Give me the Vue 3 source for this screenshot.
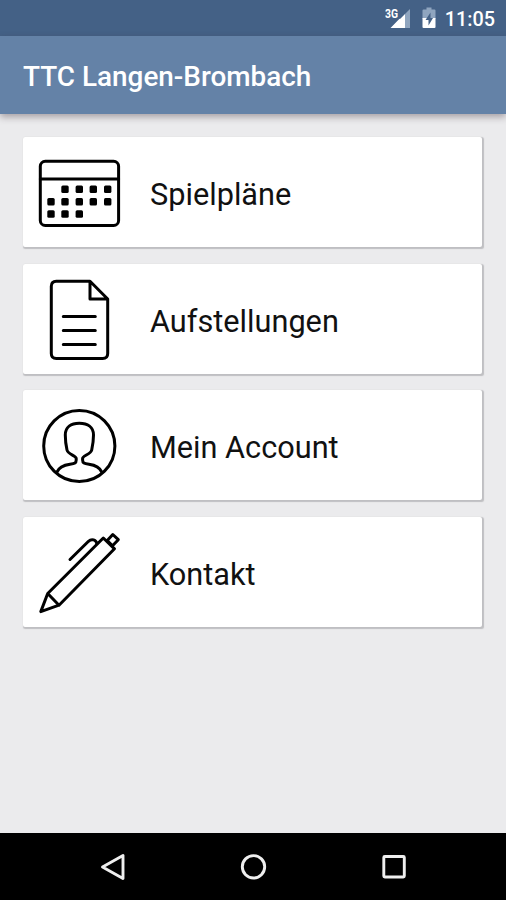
<script setup>
const items = [
  { icon: 'calendar', label: 'Spielpläne' },
  { icon: 'document', label: 'Aufstellungen' },
  { icon: 'person', label: 'Mein Account' },
  { icon: 'pen', label: 'Kontakt' },
]
const dots = [
  [42, 52.3], [56.3, 52.3], [70.3, 52.3], [84.7, 52.3],
  [28, 64.7], [42, 64.7], [56.3, 64.7], [70.3, 64.7], [84.7, 64.7],
  [28, 77], [42, 77], [56.3, 77],
]
</script>

<template>
  <div class="screen">
    <div class="status">
      <svg class="signal" viewBox="0 0 28 24" width="28" height="24">
        <path d="M20 7L25 2V21H20Z" fill="#8fa5bf" />
        <path d="M14.500 11.800L5.500 21H20V7L15 12Z" fill="#fff" />
        <text x="0" y="11" textLength="13" lengthAdjust="spacingAndGlyphs" class="net">3G</text>
      </svg>
      <svg class="battery" viewBox="0 0 14 22" width="14" height="22">
        <path d="M4.500 0.500H9.500V2.500H12.500Q13.500 2.500 13.500 3.500V12H0.500V3.500Q0.500 2.500 1.500 2.500H4.500Z" fill="#8fa5bf" />
        <path d="M0.500 11H13.500V20Q13.500 21 12.500 21H1.500Q0.500 21 0.500 20Z" fill="#fff" />
        <path d="M8.500 5.500L3.500 13H6.500V18.500L11 11H8.500Z" fill="#446186" />
      </svg>
      <span class="time">11:05</span>
    </div>
    <header class="bar"><h1>TTC Langen-Brombach</h1></header>
    <main class="list">
      <div v-for="item in items" :key="item.icon" class="card">
        <svg class="icon" viewBox="0 0 110 110" width="110" height="110">
          <g v-if="item.icon === 'calendar'">
            <rect x="17.3" y="24.3" width="78.300" height="64.200" rx="5" />
            <path d="M17.300 42H95.600" />
            <rect v-for="(d, i) in dots" :key="i" class="dot" :x="d[0] - 3.7" :y="d[1] - 3.7" width="7.4" height="7.4" rx="1.5" />
          </g>
          <g v-else-if="item.icon === 'document'">
            <path d="M33.300 17.200H67L84.700 35V89.500Q84.700 94.500 79.700 94.500H33.300Q28.300 94.500 28.300 89.500V22.200Q28.300 17.200 33.300 17.200ZM67 17.200V35H84.700M40.300 52.500H72.300M40.300 66.500H72.300M40.300 80.500H72.300" />
          </g>
          <g v-else-if="item.icon === 'person'">
            <circle cx="56.300" cy="56" r="35.600" />
            <path d="M33.700 82.300C36 77 41 75 47 74.200C52 73.500 53.200 73 53.200 70V68.500C53.200 65.500 45 64.500 44 60C43 55.500 42.300 49 42.300 45C42.300 37 48 33.300 56.300 33.300S70.500 37 70.500 45C70.500 49 69.700 55.500 68.700 60C67.700 64.500 59.600 65.500 59.600 68.500V70C59.600 73 61 73.500 66 74.200C72 75 76.700 77 79 82.300" />
          </g>
          <g v-else>
            <path d="M17.800 94.600L24.700 76.500L80.300 21L91.500 31.800L36 88.200ZM24.700 76.500L36 88.200M47 42.500L65.500 24.300C68.500 21.500 73.500 22.500 73.800 27M84.200 23.500L89.800 17.500L95.300 22.700L89.500 28.800Z" />
          </g>
        </svg>
        <span class="label">{{ item.label }}</span>
      </div>
    </main>
    <nav class="nav">
      <svg viewBox="0 0 30 30" width="30" height="30"><path d="M4.500 15L25 3.500V26.500Z" /></svg>
      <svg viewBox="0 0 30 30" width="30" height="30"><circle cx="15.500" cy="14.800" r="11.200" /></svg>
      <svg viewBox="0 0 30 30" width="30" height="30"><rect x="4.800" y="4.500" width="20.500" height="20.500" rx="1" /></svg>
    </nav>
  </div>
</template>

<style>
body { margin: 0; }
</style>

<style scoped>
.screen {
  width: 506px;
  height: 900px;
  display: flex;
  flex-direction: column;
  background: #ebebed;
  font-family: Roboto, sans-serif;
  overflow: hidden;
}
.status {
  box-sizing: border-box;
  height: 36px;
  flex: none;
  display: flex;
  justify-content: flex-end;
  align-items: flex-start;
  padding: 7px 11px 0 0;
  background: #446186;
  color: #fff;
}
.net { font: bold 12.500px Roboto, sans-serif; fill: #fff; stroke: #446186; stroke-width: 1.500px; paint-order: stroke; }
.signal { margin-right: 9px; }
.battery { margin-right: 9px; }
.time { margin-top: 1px; font-size: 19.800px; font-weight: 500; line-height: 24px; }
.bar {
  height: 78px;
  flex: none;
  display: flex;
  align-items: center;
  padding-left: 23px;
  background: #6482a7;
  box-shadow: 0 3px 7px rgba(60, 45, 55, 0.4);
}
h1 { margin: 3px 0 0; font-size: 27.900px; font-weight: 500; color: #fff; white-space: nowrap; }
.list {
  flex: 1;
  display: flex;
  flex-direction: column;
  gap: 16.600px;
  padding: 23px 24px 0 23px;
}
.card {
  height: 110px;
  display: flex;
  align-items: center;
  background: #fff;
  border-radius: 2px;
  box-shadow: 1px 1px 1px 0.500px #bfbfc2;
}
.icon { flex: none; fill: none; stroke: #000; stroke-width: 3; stroke-linecap: round; stroke-linejoin: round; }
.dot { fill: #000; stroke: none; }
.label { margin: 6px 0 0 17px; font-size: 30.700px; line-height: 36px; color: #111; white-space: nowrap; }
.nav {
  height: 67px;
  flex: none;
  display: flex;
  justify-content: center;
  align-items: center;
  gap: 110.500px;
  background: #000;
}
.nav svg { fill: none; stroke: #efefef; stroke-width: 2.900; stroke-linejoin: round; }
</style>
